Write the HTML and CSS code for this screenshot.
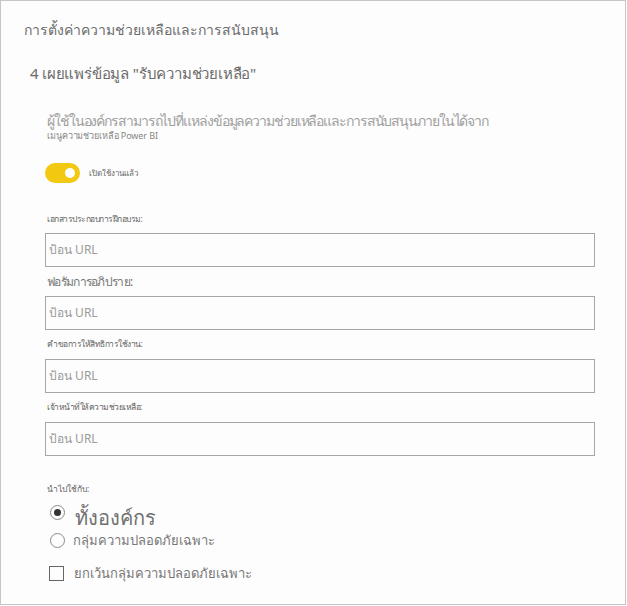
FILE: index.html
```html
<!DOCTYPE html>
<html lang="th">
<head>
<meta charset="utf-8">
<link rel="stylesheet" href="styles.css">
</head>
<body>
<div class="panel">
  <h1 class="title">การตั้งค่าความช่วยเหลือและการสนับสนุน</h1>
  <h2 class="subtitle">4 เผยแพร่ข้อมูล "รับความช่วยเหลือ"</h2>
  <div class="content">
    <p class="desc">ผู้ใช้ในองค์กรสามารถไปที่แหล่งข้อมูลความช่วยเหลือและการสนับสนุนภายในได้จาก</p>
    <p class="desc-small">เมนูความช่วยเหลือ Power BI</p>
    <div class="toggle-row">
      <span class="toggle"><span class="knob"></span></span>
      <span class="toggle-label">เปิดใช้งานแล้ว</span>
    </div>
    <div class="field first">
      <label class="label small">เอกสารประกอบการฝึกอบรม:</label>
      <div class="input">ป้อน URL</div>
    </div>
    <div class="field">
      <label class="label big">ฟอรัมการอภิปราย:</label>
      <div class="input">ป้อน URL</div>
    </div>
    <div class="field">
      <label class="label small">คำขอการให้สิทธิการใช้งาน:</label>
      <div class="input">ป้อน URL</div>
    </div>
    <div class="field">
      <label class="label small">เจ้าหน้าที่ให้ความช่วยเหลือ:</label>
      <div class="input">ป้อน URL</div>
    </div>
    <div class="apply">
      <div class="label small apply-label">นำไปใช้กับ:</div>
      <div class="radio-row r1"><span class="radio checked"></span><span class="opt-big">ทั้งองค์กร</span></div>
      <div class="radio-row r2"><span class="radio"></span><span class="opt">กลุ่มความปลอดภัยเฉพาะ</span></div>
      <div class="check-row"><span class="checkbox"></span><span class="opt">ยกเว้นกลุ่มความปลอดภัยเฉพาะ</span></div>
    </div>
  </div>
</div>
</body>
</html>
```
FILE: styles.css
```css
html, body {
  margin: 0;
  padding: 0;
  background: #ffffff;
}
body {
  font-family: Tahoma, "Segoe UI", "Noto Sans", "DejaVu Sans", sans-serif;
  color: #666;
}
.panel {
  box-sizing: border-box;
  width: 626px;
  height: 605px;
  border: 1px solid #c6c6c6;
  background: #fdfdfd;
  overflow: hidden;
}
.title {
  margin: 19px 0 0 23px;
  font-size: 14px;
  font-weight: normal;
  color: #6b6b6b;
  line-height: 20px;
  white-space: nowrap;
}
.subtitle {
  margin: 23px 0 0 29px;
  font-size: 15px;
  letter-spacing: -0.2px;
  font-weight: normal;
  color: #6b6b6b;
  line-height: 20px;
  white-space: nowrap;
}
.content {
  padding-left: 44px;
  width: 550px;
}
.desc {
  margin: 29px 0 0 2px;
  font-size: 14px;
  letter-spacing: -1.1px;
  color: #a0a0a0;
  line-height: 18px;
  white-space: nowrap;
}
.desc-small {
  margin: 0 0 0 2px;
  font-size: 9px;
  letter-spacing: -0.1px;
  color: #888;
  line-height: 12px;
  white-space: nowrap;
}
.toggle-row {
  display: flex;
  align-items: center;
  gap: 9px;
  margin-top: 21px;
  height: 20px;
}
.toggle {
  width: 35px;
  height: 20px;
  border-radius: 10px;
  background: #f2c811;
  position: relative;
}
.knob {
  position: absolute;
  right: 5px;
  top: 5px;
  width: 10px;
  height: 10px;
  border-radius: 50%;
  background: #fff;
}
.toggle-label {
  font-size: 8px;
  color: #666;
  white-space: nowrap;
}
.field {
  margin-top: 7px;
}
.field.first {
  margin-top: 29px;
}
.label {
  display: block;
  margin-left: 2px;
  white-space: nowrap;
}
.label.small {
  font-size: 8.5px;
  letter-spacing: -0.5px;
  line-height: 14px;
  margin-bottom: 8px;
  color: #666;
}
.field.first .label.small {
  margin-bottom: 7px;
}
.label.big {
  font-size: 12px;
  letter-spacing: -0.7px;
  line-height: 18px;
  margin-top: -1px;
  margin-bottom: 5px;
  color: #777;
}
.input {
  box-sizing: border-box;
  width: 550px;
  height: 34px;
  border: 1px solid #a6a6a6;
  padding-left: 3px;
  font-size: 12px;
  line-height: 32px;
  color: #9a9a9a;
  white-space: nowrap;
}
.apply {
  margin-top: 26px;
}
.label.apply-label {
  letter-spacing: 0;
  margin-bottom: 0;
}
.radio-row, .check-row {
  display: flex;
  align-items: center;
}
.radio {
  box-sizing: border-box;
  flex: none;
  width: 15px;
  height: 15px;
  border: 1px solid #8a8a8a;
  border-radius: 50%;
  margin-left: 5px;
  display: flex;
  align-items: center;
  justify-content: center;
}
.radio.checked::after {
  content: "";
  width: 7px;
  height: 7px;
  border-radius: 50%;
  background: #333;
}
.r1 {
  margin-top: 5px;
  height: 30px;
  align-items: flex-start;
}
.r1 .radio {
  margin-top: 4px;
}
.opt-big {
  font-size: 20px;
  line-height: 24px;
  margin-left: 10px;
  margin-top: 5px;
  color: #707070;
  white-space: nowrap;
}
.r2 {
  height: 16px;
  margin-top: 1px;
}
.opt {
  font-size: 13px;
  line-height: 16px;
  margin-left: 8px;
  color: #777;
  white-space: nowrap;
}
.check-row {
  margin-top: 17px;
  height: 16px;
}
.checkbox {
  box-sizing: border-box;
  flex: none;
  width: 15px;
  height: 15px;
  border: 1px solid #666;
  margin-left: 4px;
  margin-right: 2px;
}
```
